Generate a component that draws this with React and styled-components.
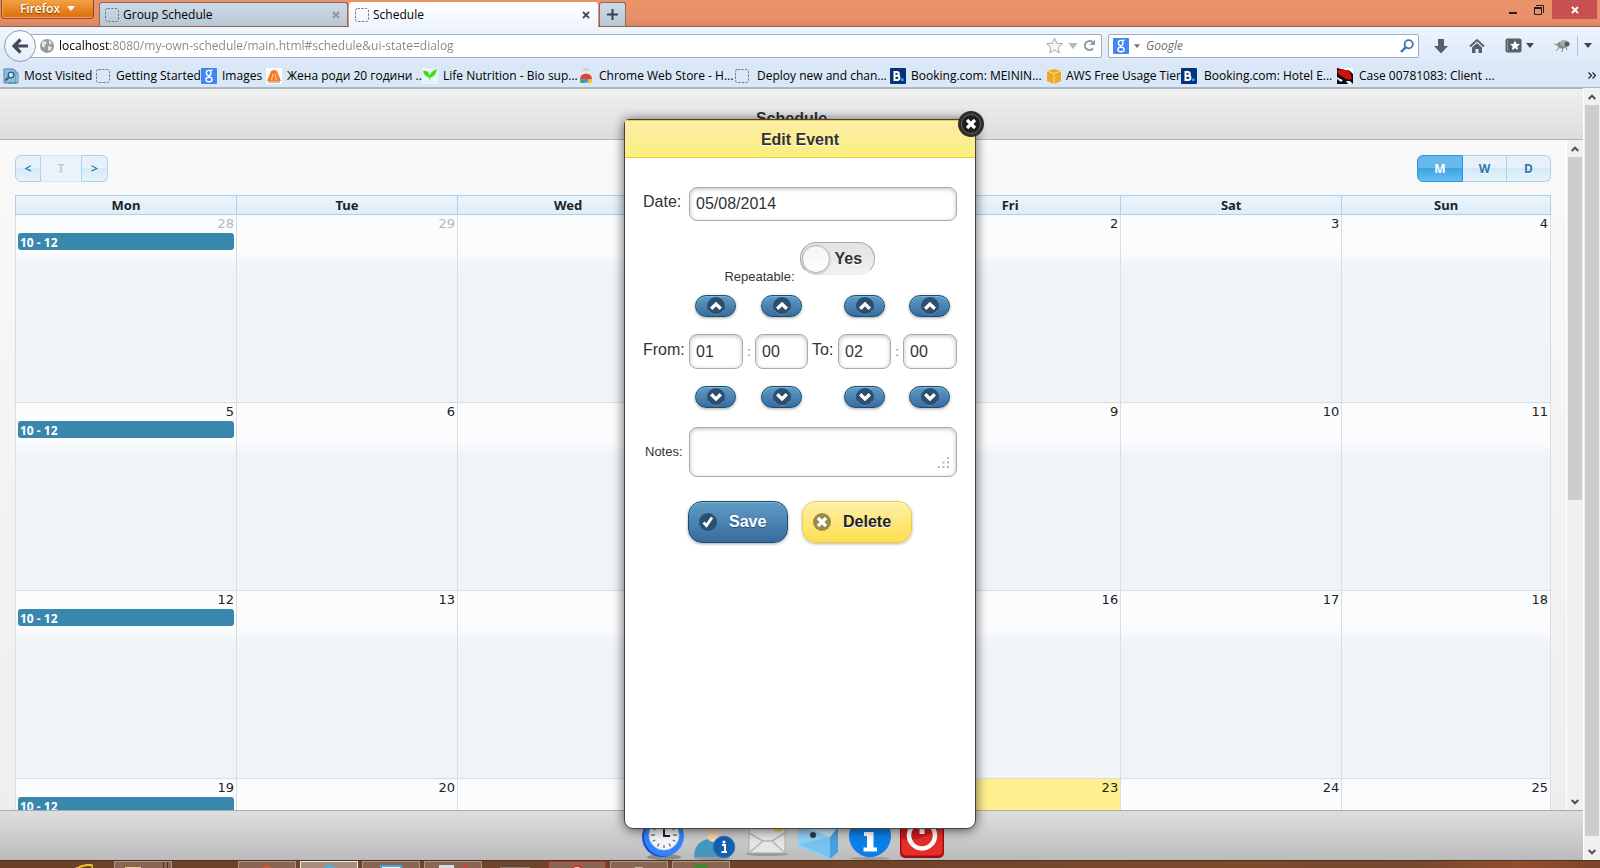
import React from "react";
import styled, { createGlobalStyle, css } from "styled-components";

const UI = '"Open Sans", "Noto Sans", sans-serif';
const ARIAL = '"Liberation Sans", Arial, sans-serif';
const CAL = '"Noto Sans", "Open Sans", sans-serif';

const Global = createGlobalStyle`
  * { box-sizing: border-box; }
  html, body { margin: 0; height: 100%; }
  body { font-family: ${ARIAL}; color: #333; overflow: hidden; }
  button, input, textarea { font: inherit; color: inherit; margin: 0; }
  button { cursor: pointer; }
  svg { display: block; flex: none; }
`;

const Window = styled.div`
  display: flex;
  flex-direction: column;
  height: 100vh;
`;

/* ---------- browser chrome ---------- */
const TitleBar = styled.header`
  display: flex;
  align-items: flex-start;
  height: 27px;
  flex: none;
  padding-left: 1px;
  background: linear-gradient(#ea9268, #e8906a 70%, #d98560);
  border-bottom: 1px solid #94614c;
  font: 12px/16px ${UI};
`;
const FirefoxButton = styled.button`
  display: flex;
  align-items: center;
  justify-content: center;
  gap: 7px;
  width: 93px;
  height: 19px;
  padding: 0 0 1px;
  margin-right: 4px;
  border: 1px solid #8f4a1b;
  border-top: 0;
  border-radius: 0 0 4px 4px;
  background: linear-gradient(#f0a347, #e87f1c 60%, #d96d12);
  box-shadow: inset 0 -1px 0 #f4a862, inset 1px 0 0 #f2a55a;
  color: #fff;
  font-weight: 600;
  text-shadow: 0 1px 1px #7a3a00;
`;
const Tab = styled.button`
  display: flex;
  align-items: center;
  gap: 3px;
  width: 249px;
  height: ${(p) => (p.$active ? 25 : 24)}px;
  margin: 2px 0 0 1px;
  padding: 0 7px 0 4px;
  border: 1px solid ${(p) => (p.$active ? "#fff" : "#8d6a62")};
  border-bottom: 0;
  border-radius: 3px 3px 0 0;
  background: ${(p) => (p.$active ? "linear-gradient(#fff, #eef5fd)" : "linear-gradient(#cddbe8, #b9c7d5)")};
  color: #000;
  text-align: left;
`;
const Grow = styled.span`
  flex: 1;
  min-width: 0;
  white-space: nowrap;
  overflow: hidden;
`;
const NewTab = styled.button`
  display: grid;
  place-items: center;
  width: 27px;
  height: 24px;
  margin: 2px 0 0 1px;
  padding: 0;
  border: 1px solid #8d6a62;
  border-bottom: 0;
  border-radius: 3px 3px 0 0;
  background: linear-gradient(#cddbe8, #b9c7d5);
`;
const WindowButtons = styled.div`
  display: flex;
  margin-left: auto;
  padding-right: 3px;
`;
const WindowButton = styled.button`
  display: grid;
  place-items: center;
  width: ${(p) => (p.$close ? 45 : 26)}px;
  height: 19px;
  padding: 0;
  border: 0;
  background: ${(p) => (p.$close ? "#c75050" : "transparent")};
`;

const NavBar = styled.div`
  display: flex;
  align-items: center;
  height: 35px;
  flex: none;
  padding: 2px 0 0 4px;
  background: linear-gradient(#eef5fd, #dce9f7);
  font: 12px/16px ${UI};
`;
const BackButton = styled.button`
  z-index: 1;
  display: grid;
  place-items: center;
  width: 32px;
  height: 32px;
  flex: none;
  padding: 0;
  border: 1px solid #8d9db3;
  border-radius: 50%;
  background: linear-gradient(#fbfdff, #e3edf8);
`;
const Field = styled.label`
  display: flex;
  align-items: center;
  height: 24px;
  border: 1px solid #9cafc6;
  border-radius: 2px;
  background: #fff;
`;
const UrlField = styled(Field)`
  flex: 1;
  margin-left: -8px;
  padding: 0 5px 0 11px;
  gap: 5px;
`;
const UrlInput = styled.input`
  flex: 1;
  min-width: 0;
  padding: 0;
  border: 0;
  outline: 0;
  color: transparent;
  background: linear-gradient(to right, #000 51px, #858585 51px);
  background-clip: text;
  -webkit-background-clip: text;
`;
const SearchField = styled(Field)`
  width: 311px;
  margin-left: 6px;
  padding: 0 4px;
  gap: 5px;
`;
const SearchInput = styled.input`
  flex: 1;
  min-width: 0;
  padding: 0 0 0 1px;
  border: 0;
  outline: 0;
  background: transparent;
  &::placeholder { color: #6d6d6d; font-style: italic; opacity: 1; }
`;
const Tools = styled.div`
  display: flex;
  align-items: center;
  gap: 20px;
  padding: 0 8px 0 14px;
`;
const ToolButton = styled.button`
  display: flex;
  align-items: center;
  gap: 4px;
  padding: 0;
  border: 0;
  background: none;
`;
const ToolDivider = styled.span`
  display: flex;
  align-items: center;
  height: 20px;
  margin-left: -13px;
  padding-left: 6px;
  border-left: 1px solid #b4c2d2;
`;

const BookmarksBar = styled.nav`
  display: flex;
  align-items: center;
  height: 26px;
  flex: none;
  padding: 2px 4px 0 3px;
  background: #d9e7f6;
  border-bottom: 1px solid #a9b7ca;
  font: 12px/16px ${UI};
`;
const Bookmark = styled.a`
  display: flex;
  align-items: center;
  gap: ${(p) => p.$gap || 5}px;
  width: ${(p) => p.$w}px;
  flex: none;
  color: #000;
  text-decoration: none;
  white-space: nowrap;
`;

/* ---------- page ---------- */
const Viewport = styled.div`
  position: relative;
  display: flex;
  flex: 1;
  min-height: 0;
  overflow: hidden;
`;
const Page = styled.div`
  display: flex;
  flex-direction: column;
  flex: 1;
  min-width: 0;
`;
const PageHeader = styled.div`
  display: grid;
  place-items: center;
  height: 52px;
  flex: none;
  padding-top: 8px;
  border-top: 1px solid #b3b3b3;
  border-bottom: 1px solid #b3b3b3;
  background: linear-gradient(#f0f0f0, #ddd);
`;
const PageTitle = styled.h1`
  margin: 0;
  font-size: 16px;
  line-height: 21px;
  text-shadow: 0 1px 0 #fff;
`;
const Body = styled.div`
  display: flex;
  flex: 1;
  min-height: 0;
`;
const Content = styled.main`
  flex: 1;
  min-width: 0;
  overflow: hidden;
  padding: 15px 15px 0;
  background: linear-gradient(#f9f9f9, #eee);
`;

const ScrollTrack = styled.div`
  display: flex;
  flex-direction: column;
  align-items: center;
  width: 17px;
  flex: none;
  padding: 0 1px;
  background: #f0f0f0;
  border-left: 1px solid #fff;
`;
const ScrollArrow = styled.button`
  display: grid;
  place-items: center;
  width: 15px;
  height: 17px;
  flex: none;
  padding: 0;
  border: 0;
  background: none;
`;
const ScrollArea = styled.div`
  flex: 1;
  align-self: stretch;
`;
const Thumb = styled.div`
  height: ${(p) => p.$size}%;
  background: #cdcdcd;
`;

const Toolbar = styled.div`
  display: flex;
  justify-content: space-between;
  margin-bottom: 13px;
  font: bold 12px/16px ${CAL};
`;
const ButtonGroup = styled.div`
  display: flex;
`;
const CalButton = styled.button`
  width: ${(p) => p.$w}px;
  height: 27px;
  padding: 0;
  border: 1px solid #aed0ea;
  border-left-width: ${(p) => (p.$first ? 1 : 0)}px;
  border-radius: ${(p) => (p.$first ? "6px 0 0 6px" : p.$last ? "0 6px 6px 0" : "0")};
  background: linear-gradient(#e6f1fa 50%, #d3e9f7 50%, #e6f3fb);
  color: #2779aa;
  text-shadow: 0 1px 0 #fff;
  ${(p) => p.$on && css`
    border: 1px solid #2694e8;
    background: linear-gradient(#66b9ea 50%, #3ba5e2 50%, #68bcec);
    color: #fff;
    text-shadow: none;
  `}
  &:disabled {
    border-color: #d8e7f3;
    border-right-color: #aed0ea;
    background: #ebf2f9;
    color: #b0ccdf;
    cursor: default;
  }
`;

const Table = styled.table`
  width: 100%;
  table-layout: fixed;
  border-collapse: collapse;
  font-family: ${CAL};
`;
const DayHead = styled.th`
  width: 14.4%;
  height: 19px;
  padding: 1px 0 0;
  border: 1px solid #aed0ea;
  background: linear-gradient(#eaf4fb, #deedf7);
  color: #222;
  font-size: 13px;
  line-height: 17px;
  &:last-child { width: auto; }
`;
const DayCell = styled.td`
  height: 188px;
  padding: 0 2px;
  vertical-align: top;
  border: 1px solid #ddd;
  background: ${(p) => (p.$today ? "#ffef8f" : "linear-gradient(#fbfcfe 35px, #f0f4f7 55px)")};
  ${(p) => p.$today && css`border-top-color: #f9dd34;`}
`;
const DayNumber = styled.div`
  height: 16px;
  color: ${(p) => (p.$other ? "#b8b8b8" : "#222")};
  font: 13px/17px "DejaVu Sans", sans-serif;
  text-align: right;
`;
const EventBar = styled.a`
  display: block;
  height: 17px;
  margin-top: 2px;
  padding-left: 2px;
  border-radius: 3px;
  background: #3a87ad;
  color: #fff;
  font: bold 12px/19px ${UI};
  text-decoration: none;
`;

const Footer = styled.footer`
  display: flex;
  justify-content: center;
  gap: 8px;
  height: 50px;
  flex: none;
  padding-top: 4px;
  border-top: 1px solid #aaa;
  background: linear-gradient(#dedede, #bbb);
`;
const FooterButton = styled.button`
  width: 44px;
  height: 46px;
  padding: 0;
  border: 0;
  background: none;
`;

/* ---------- dialog ---------- */
const Overlay = styled.div`
  position: absolute;
  inset: 0;
  display: flex;
  justify-content: center;
  padding: 31px 0;
`;
const Dialog = styled.section`
  position: relative;
  width: 352px;
  border: 1px solid #444;
  border-radius: 5px 0 9px 9px;
  background: #fff;
  box-shadow: 0 1px 12px rgba(0, 0, 0, 0.65);
`;
const DialogHeader = styled.h2`
  height: 38px;
  margin: 0;
  border-top: 1px solid #f7c942;
  border-bottom: 1px solid #f7c942;
  background: linear-gradient(#fceda7, #fbef7e);
  font-size: 16px;
  line-height: 37px;
  text-align: center;
  text-shadow: 0 1px 0 #fff;
`;
const CloseButton = styled.button`
  position: absolute;
  top: -9px;
  right: -9px;
  width: 26px;
  height: 26px;
  padding: 0;
  border: 0;
  background: none;
`;
const Form = styled.form`
  display: flex;
  flex-direction: column;
  padding: 29px 18px 0;
`;
const Row = styled.div`
  display: grid;
  grid-template-columns: 46px 1fr;
  align-items: center;
`;
const Label = styled.label`
  font-size: ${(p) => (p.$small ? 13 : 16)}px;
  line-height: 20px;
  padding-left: ${(p) => (p.$small ? 2 : 0)}px;
  padding-bottom: ${(p) => (p.$small ? 0 : 4)}px;
`;
const box = css`
  width: 100%;
  border: 1px solid #aaa;
  border-radius: 8px;
  background: #fff;
  outline: 0;
  box-shadow: inset 0 1px 4px rgba(0, 0, 0, 0.25);
  font-size: 16px;
`;
const TextInput = styled.input`
  ${box}
  height: ${(p) => p.$h || 35}px;
  padding: 0 6px;
`;
const NotesWrap = styled.div`
  position: relative;
  height: 50px;
`;
const Notes = styled.textarea`
  ${box}
  display: block;
  height: 50px;
  resize: none;
  padding: 6px;
`;
const Grip = styled.svg`
  position: absolute;
  right: 8px;
  bottom: 9px;
`;
const RepeatRow = styled.div`
  display: flex;
  justify-content: center;
  gap: 5px;
  margin: 21px 0 10px;
  padding-right: 1px;
  height: 43px;
`;
const RepeatLabel = styled.label`
  align-self: flex-end;
  font-size: 13px;
  line-height: 16px;
`;
const Toggle = styled.label`
  display: flex;
  align-items: center;
  gap: 5px;
  width: 75px;
  height: 33px;
  padding-left: 1px;
  border: 1px solid #aaa;
  border-bottom-color: #eee;
  border-radius: 16px;
  background: linear-gradient(#e2e2e2, #f2f2f2);
  font-weight: bold;
  font-size: 16px;
  line-height: 35px;
  text-shadow: 0 1px 0 #fff;
`;
const ToggleInput = styled.input`
  appearance: none;
  width: 28px;
  height: 28px;
  border: 1px solid #b5b5b5;
  border-radius: 50%;
  background: linear-gradient(#f4f4f4, #fefefe);
  box-shadow: 0 1px 2px rgba(0, 0, 0, 0.25);
`;
const TimeGrid = styled.div`
  display: grid;
  grid-template-columns: 46px 54px 12px 53px 30px 53px 12px 54px;
  grid-template-rows: 22px 35px 22px;
  row-gap: 17px;
  align-items: center;
  margin-bottom: 19px;
`;
const blue = css`
  border: 1px solid #145072;
  background: linear-gradient(#5f9cc5, #396b9e);
  box-shadow: inset 0 1px 0 #85b4d3, 0 1px 3px rgba(0, 0, 0, 0.35);
`;
const Spin = styled.button`
  ${blue}
  display: grid;
  place-items: center;
  grid-column: ${(p) => p.$col};
  margin-left: 6px;
  width: 41px;
  height: 22px;
  padding: 0;
  border-radius: 11px;
`;
const Sep = styled.span`
  font-size: 13px;
  text-align: center;
  color: #666;
`;
const ToLabel = styled(Label)`
  padding-left: 4px;
`;
const Actions = styled.div`
  display: flex;
  gap: 14px;
  margin: 24px 0 0 45px;
`;
const Action = styled.button`
  display: flex;
  align-items: center;
  gap: 12px;
  width: ${(p) => (p.$danger ? 110 : 100)}px;
  height: 42px;
  padding: 0 0 0 10px;
  border-radius: 14px;
  font-weight: bold;
  font-size: 16px;
  text-align: left;
  ${blue}
  color: #fff;
  text-shadow: 0 1px 1px #194b7e;
  ${(p) => p.$danger && css`
    border-color: #f7c942;
    background: linear-gradient(#fef0a8, #fddf4f);
    box-shadow: inset 0 1px 0 #fff5cc, 0 1px 3px rgba(0, 0, 0, 0.3);
    color: #222;
    text-shadow: 0 1px 0 #fff;
  `}
`;

/* ---------- taskbar ---------- */
const TaskBar = styled.div`
  display: flex;
  height: 8px;
  flex: none;
  gap: 4px;
  overflow: hidden;
  padding-left: 52px;
  border-top: 1px solid #4b3122;
  background: linear-gradient(to right, #6b3f28, #6f452b 25%, #6e4229 50%, #7d4a2b 78%, #75482e 88%, #924e2b 95%, #7c4529);
`;
const Task = styled.button`
  display: flex;
  justify-content: center;
  align-items: flex-start;
  width: 58px;
  height: 30px;
  flex: none;
  padding: 2px 0 0;
  border: 1px solid ${(p) => p.$edge || "#ad9488"};
  background: ${(p) => (p.$active ? "#a88c7c" : "#8a6652")};
  ${(p) => p.$plain && css`
    border-color: transparent;
    background: none;
  `}
  ${(p) => p.$stack && css`
    padding-right: 20px;
    box-shadow: inset -3px 0 0 #8a6652, inset -4px 0 0 #4b3122, inset -7px 0 0 #8a6652, inset -8px 0 0 #4b3122;
  `}
`;

/* ---------- drawings ---------- */
const Caret = ({ color = "#3d4854", size = 8 }) => (
  <svg width={size} height={size / 2 + 1} viewBox="0 0 8 5"><path d="M0 0h8L4 5z" fill={color} /></svg>
);
const Dashed = () => (
  <svg width="16" height="16" viewBox="0 0 16 16">
    <rect x="1.5" y="1.5" width="13" height="13" rx="2" fill="none" stroke="#6f7780" strokeDasharray="2.4 1.3" />
  </svg>
);
const Cross = ({ color }) => (
  <svg width="8" height="8" viewBox="0 0 8 8"><path d="M1 1l6 6M7 1L1 7" stroke={color} strokeWidth="1.8" /></svg>
);
const GoogleIcon = () => (
  <svg width="16" height="16" viewBox="0 0 16 16">
    <rect width="16" height="16" rx="1" fill="#4485f4" />
    <g fill="none" stroke="#fff" strokeWidth="1.4">
      <ellipse cx="7.7" cy="5" rx="2.3" ry="2.6" />
      <path d="M8 7.5c-1.2 1 .2 1.5 1.3 2.2M9.5 2.2h2" />
      <ellipse cx="8" cy="11.4" rx="3.1" ry="2.3" />
    </g>
  </svg>
);
const BookingIcon = () => (
  <svg width="16" height="16" viewBox="0 0 16 16">
    <rect width="16" height="16" rx="1" fill="#04327d" />
    <path d="M4.500 4h2.500a1.700 1.700 0 0 1 0 3.700H4.500zM4.500 7.700h2.800a2 2 0 0 1 0 4.300H4.500z" fill="none" stroke="#fff" strokeWidth="2" />
    <circle cx="12.3" cy="11.8" r="1.5" fill="#24b1f0" />
  </svg>
);
const icons = {
  visited: (
    <svg width="16" height="16" viewBox="0 0 16 16">
      <path d="M1 1h9l3 2v12H1z" fill="#8cbede" stroke="#4a86ac" />
      <path d="M13 5h2v10H5" fill="none" stroke="#4a86ac" />
      <circle cx="8" cy="7" r="2.8" fill="#cfe6f4" stroke="#2b5f85" strokeWidth="1.3" />
      <path d="M6 9l-3.5 3.5" stroke="#2b5f85" strokeWidth="2" />
    </svg>
  ),
  dashed: <Dashed />,
  google: <GoogleIcon />,
  orange: (
    <svg width="16" height="16" viewBox="0 0 16 16">
      <rect width="16" height="16" fill="#fff" />
      <path d="M1 13L5 3q3-2 6 0l4 10z" fill="#f57d2a" />
      <path d="M5.500 12l1.500-6M10.500 12L9 6" stroke="#fbd2b0" />
      <path d="M2 14h12" stroke="#b9684a" />
    </svg>
  ),
  leaf: (
    <svg width="16" height="16" viewBox="0 0 16 16">
      <rect width="16" height="16" fill="#e9f4f4" />
      <path d="M1 3q6-1 6.5 5Q9 3 15 1q-1 7-6.5 8.500L8 14q0-4-2-5Q2 8 1 3z" fill="#3fdc1e" />
    </svg>
  ),
  store: (
    <svg width="16" height="16" viewBox="0 0 16 16">
      <path d="M2 4h12l1 11H1z" fill="#e9e9e9" /><path d="M6 3V1h4v2" fill="none" stroke="#bbb" />
      <path d="M2 11a6 5.500 0 0 1 12 0l-6 1z" fill="#dd4433" />
      <path d="M2 11l6 1-1 3H2.500z" fill="#3aa757" /><path d="M14 11l-6 1 1 3h4.500z" fill="#fbc116" />
      <circle cx="8" cy="12.500" r="2.200" fill="#4b8bf4" />
    </svg>
  ),
  booking: <BookingIcon />,
  aws: (
    <svg width="16" height="16" viewBox="0 0 16 16">
      <path d="M1 3l7-2 7 2v10l-7 3-7-3z" fill="#efa920" />
      <path d="M1 3l7 2.5L15 3M8 5.5V16" fill="none" stroke="#fbdc95" />
    </svg>
  ),
  redhat: (
    <svg width="16" height="16" viewBox="0 0 16 16">
      <rect width="16" height="16" fill="#0a0a0a" />
      <path d="M0 0h16v6l-3-3z" fill="#fff" />
      <path d="M0 3l4-2 3 1 5 0 2 5 1 4q-5 2-9-2Q1 7 0 3z" fill="#cc1010" />
      <path d="M0 9q3 2 6 3l-2 2-4-3zM9 13l4 0 3 3h-5z" fill="#eee" />
    </svg>
  ),
};
const Chevron = ({ up }) => (
  <svg width="18" height="18" viewBox="0 0 18 18">
    <circle cx="9" cy="9" r="9" fill="#2b4f70" />
    <path d="M1.500 13a8.500 8.500 0 0 0 15 0" fill="none" stroke="#7aa0bf" opacity=".7" />
    <path d={up ? "M4.200 11.700L9 7l4.800 4.700" : "M4.200 6.300L9 11l4.800-4.700"} fill="none" stroke="#fff" strokeWidth="3.300" />
  </svg>
);
const ScrollChevron = ({ up }) => (
  <svg width="8" height="6" viewBox="0 0 8 6">
    <path d={up ? "M.7 5L4 1.700 7.300 5" : "M.7 1L4 4.300 7.300 1"} fill="none" stroke="#505050" strokeWidth="2" />
  </svg>
);

const ClockIcon = () => (
  <svg width="44" height="46" viewBox="0 0 44 46">
    <ellipse cx="24" cy="42" rx="17" ry="3" fill="#8b8b8b" />
    <circle cx="22" cy="22" r="20" fill="#1a4fd0" />
    <circle cx="24" cy="21" r="20" fill="#3583fb" />
    <circle cx="24" cy="20" r="15" fill="#f4f6f9" stroke="#c8d7ea" />
    <g stroke="#777" strokeWidth="1.4">
      <path d="M24 8v3M24 30v3M11 20h4M33 20h4M17.500 8.700l1.500 2.600M29 28.700l1.500 2.600M12.700 26.500l2.600-1.500M32.700 15l2.600-1.500M17.500 31.300l1.500-2.600M12.700 13.500l2.600 1.500M32.700 25l2.600 1.500" />
    </g>
    <path d="M24 9v12h6" fill="none" stroke="#222" strokeWidth="2" />
  </svg>
);
const PersonIcon = () => (
  <svg width="44" height="46" viewBox="0 0 44 46">
    <ellipse cx="20" cy="43" rx="18" ry="2" fill="#999" />
    <path d="M2 42q0-15 14-18h10q9 3 10 18z" fill="#4597bd" />
    <path d="M15 23q6 8 11 0l-2-6h-7z" fill="#f5d5b5" /><circle cx="21" cy="12" r="8" fill="#f0c9a5" />
    <circle cx="32" cy="32" r="10.800" fill="#135fae" stroke="#2f7cc4" />
    <circle cx="32" cy="27" r="1.600" fill="#fff" /><path d="M30 30h3v7M29.500 37h5.500" fill="none" stroke="#fff" strokeWidth="2" />
  </svg>
);
const MailIcon = () => (
  <svg width="44" height="46" viewBox="0 0 44 46">
    <ellipse cx="23" cy="39" rx="21" ry="2" fill="#999" />
    <path d="M5 10h36v28H5z" fill="#e6e6e6" stroke="#aaa" />
    <path d="M5 38l14-12h9l13 12M5 18l14 8M41 18l-13 8" fill="none" stroke="#b5b5b5" strokeWidth="1.5" />
    <circle cx="34" cy="11" r="6" fill="#f0d43c" />
  </svg>
);
const BoxIcon = () => (
  <svg width="44" height="46" viewBox="0 0 44 46">
    <path d="M2 10l32 12v22L2 32z" fill="#90d0f6" /><path d="M34 22l8-10v25l-8 7z" fill="#4aa0dc" />
    <path d="M2 10l20-8 20 10-8 10z" fill="#c3e7fb" /><path d="M3 29l31-7v21z" fill="#67b9ee" opacity=".6" />
    <circle cx="17" cy="20" r="3" fill="#333c45" />
  </svg>
);
const InfoIcon = () => (
  <svg width="44" height="46" viewBox="0 0 44 46">
    <ellipse cx="22" cy="43.500" rx="20" ry="1.500" fill="#999" />
    <circle cx="22" cy="21" r="21" fill="#0b7fe9" />
    <circle cx="22" cy="10.500" r="3.500" fill="#fff" />
    <path d="M16 17h9.500v15.500H29v4H15.500v-4H19V21h-3z" fill="#fff" />
  </svg>
);
const PowerIcon = () => (
  <svg width="44" height="46" viewBox="0 0 44 46">
    <rect x="0" y="1" width="44" height="42" rx="5" fill="#9b0d10" />
    <rect x="1" y="0" width="42" height="41" rx="5" fill="#d4181a" />
    <path d="M2 24q20 3 40-12v24q0 4-4 4H6q-4 0-4-4z" fill="#ee4034" opacity=".6" />
    <path d="M13 11a13 13 0 1 0 18 0" fill="none" stroke="#fff" strokeWidth="4.500" />
    <path d="M22 5v14" stroke="#fff" strokeWidth="5" />
  </svg>
);

const bookmarks = [
  ["visited", "Most Visited", 92],
  ["dashed", "Getting Started", 106],
  ["google", "Images", 65],
  ["orange", "Жена роди 20 години ...", 156],
  ["leaf", "Life Nutrition - Bio sup...", 156],
  ["store", "Chrome Web Store - H...", 156],
  ["dashed", "Deploy new and chan...", 156, 7],
  ["booking", "Booking.com: MEININ...", 156],
  ["aws", "AWS Free Usage Tier", 135, 4],
  ["booking", "Booking.com: Hotel E...", 156, 7],
  ["redhat", "Case 00781083: Client ...", 160, 6],
];
const dayNames = ["Mon", "Tue", "Wed", "Thu", "Fri", "Sat", "Sun"];
const weeks = [
  [28, 29, 30, 1, 2, 3, 4],
  [5, 6, 7, 8, 9, 10, 11],
  [12, 13, 14, 15, 16, 17, 18],
  [19, 20, 21, 22, 23, 24, 25],
];
const spinColumns = [[2, "from hour"], [4, "from minute"], [6, "to hour"], [8, "to minute"]];

const Scrollbar = ({ size }) => (
  <ScrollTrack>
    <ScrollArrow aria-label="Scroll up"><ScrollChevron up /></ScrollArrow>
    <ScrollArea><Thumb $size={size} /></ScrollArea>
    <ScrollArrow aria-label="Scroll down"><ScrollChevron /></ScrollArrow>
  </ScrollTrack>
);

function Chrome() {
  return (
    <>
      <TitleBar>
        <FirefoxButton>Firefox <Caret color="#fff" /></FirefoxButton>
        <Tab><Dashed /><Grow>Group Schedule</Grow><Cross color="#8a949e" /></Tab>
        <Tab $active><Dashed /><Grow>Schedule</Grow><Cross color="#444c55" /></Tab>
        <NewTab aria-label="New tab">
          <svg width="11" height="11" viewBox="0 0 11 11"><path d="M5.500 0v11M0 5.500h11" stroke="#33424f" strokeWidth="2" /></svg>
        </NewTab>
        <WindowButtons>
          <WindowButton aria-label="Minimize">
            <svg width="8" height="10" viewBox="0 0 8 10"><path d="M0 8h8" stroke="#222" strokeWidth="2" /></svg>
          </WindowButton>
          <WindowButton aria-label="Restore">
            <svg width="10" height="10" viewBox="0 0 10 10"><path d="M2 .5h7.500V8M.5 2.500h7v7h-7z" fill="none" stroke="#222" /><path d="M0 3h8" stroke="#222" strokeWidth="2" /></svg>
          </WindowButton>
          <WindowButton $close aria-label="Close"><Cross color="#fff" /></WindowButton>
        </WindowButtons>
      </TitleBar>
      <NavBar>
        <BackButton aria-label="Back">
          <svg width="16" height="16" viewBox="0 0 16 16"><path d="M8.500 1.500L2 8l6.500 6.500M2.500 8H16" fill="none" stroke="#3f4b58" strokeWidth="3.200" /></svg>
        </BackButton>
        <UrlField>
          <svg width="14" height="14" viewBox="0 0 14 14">
            <circle cx="7" cy="7" r="7" fill="#9a9a9a" />
            <path d="M2 3l3-1 2 2-2 2-1 3-2-2zM9 1l3 3-2 2-1-2zM8 7l4 1-2 4-2-1z" fill="#e6e6e6" />
          </svg>
          <UrlInput aria-label="Address" defaultValue="localhost:8080/my-own-schedule/main.html#schedule&ui-state=dialog" />
          <svg width="17" height="17" viewBox="0 0 17 17"><path d="M8.500 1l2.200 5.200 5.600.5-4.200 3.800 1.200 5.500-4.800-2.900L3.700 16l1.200-5.500L.7 6.700l5.600-.5z" fill="#f6f6f6" stroke="#a8a8a8" /></svg>
          <Caret color="#b3b9c0" size={10} />
          <svg width="13" height="13" viewBox="0 0 13 13"><path d="M10 9.500A4.600 4.600 0 1 1 10 3.500" fill="none" stroke="#939ca5" strokeWidth="2" /><path d="M12 .5V6H6.500z" fill="#939ca5" /></svg>
        </UrlField>
        <SearchField>
          <GoogleIcon />
          <Caret color="#6b737c" size={6} />
          <SearchInput aria-label="Search" placeholder="Google" />
          <svg width="14" height="14" viewBox="0 0 14 14"><circle cx="8.700" cy="5.300" r="4.100" fill="none" stroke="#3873b3" strokeWidth="1.800" /><path d="M5.700 8.300L1 13" stroke="#3873b3" strokeWidth="2.400" /></svg>
        </SearchField>
        <Tools>
          <ToolButton aria-label="Downloads">
            <svg width="16" height="16" viewBox="0 0 16 16"><path d="M5 1h6v7h4l-7 7.500L1 8h4z" fill="#55606d" /></svg>
          </ToolButton>
          <ToolButton aria-label="Home">
            <svg width="16" height="16" viewBox="0 0 16 16"><path d="M1 8.500L8 2l7 6.500" fill="none" stroke="#55606d" strokeWidth="2" /><path d="M3 9.500L8 5l5 4.500V15h-3.500v-4h-3v4H3z" fill="#55606d" /></svg>
          </ToolButton>
          <ToolButton aria-label="Bookmarks">
            <svg width="17" height="15" viewBox="0 0 17 15"><rect x=".5" y=".5" width="16" height="14" rx="2" fill="#55606d" /><path d="M2.500 2v11" stroke="#8c97a3" /><path d="M10 2.500l1.500 3.200 3.500.4-2.600 2.400.7 3.500-3.100-1.800L6.900 12l.7-3.500L5 6.100l3.500-.4z" fill="#fff" /></svg>
            <Caret size={8} />
          </ToolButton>
          <ToolButton aria-label="Firebug">
            <svg width="16" height="14" viewBox="0 0 16 14"><path d="M0 5l5 1M2 12l4-4M8 13l1-4M13 11l-1-4" stroke="#888" /><ellipse cx="8" cy="6" rx="5" ry="3.500" fill="#8a8a8a" /><ellipse cx="10" cy="4" rx="4" ry="3" fill="#aaa" /><circle cx="13" cy="5" r="2.500" fill="#5a5a5a" /></svg>
          </ToolButton>
          <ToolDivider><Caret /></ToolDivider>
        </Tools>
      </NavBar>
      <BookmarksBar>
        {bookmarks.map(([icon, text, w, gap]) => (
          <Bookmark key={text} href="#" $w={w} $gap={gap}>{icons[icon]}{text}</Bookmark>
        ))}
        <Grow />
        <svg width="8" height="7" viewBox="0 0 8 7"><path d="M.5.500l3 3-3 3M4.500.500l3 3-3 3" fill="none" stroke="#222" strokeWidth="1.200" /></svg>
      </BookmarksBar>
    </>
  );
}

function Calendar() {
  return (
    <Content>
      <Toolbar>
        <ButtonGroup>
          <CalButton $w={26} $first>&lt;</CalButton>
          <CalButton $w={41} disabled>T</CalButton>
          <CalButton $w={26} $last>&gt;</CalButton>
        </ButtonGroup>
        <ButtonGroup>
          <CalButton $w={46} $first $on>M</CalButton>
          <CalButton $w={44}>W</CalButton>
          <CalButton $w={44} $last>D</CalButton>
        </ButtonGroup>
      </Toolbar>
      <Table>
        <thead><tr>{dayNames.map((d) => <DayHead key={d}>{d}</DayHead>)}</tr></thead>
        <tbody>
          {weeks.map((week, w) => (
            <tr key={w}>
              {week.map((day, i) => (
                <DayCell key={day} $today={w === 3 && day === 23}>
                  <DayNumber $other={w === 0 && day > 20}>{day}</DayNumber>
                  {i === 0 && <EventBar href="#">10 - 12</EventBar>}
                </DayCell>
              ))}
            </tr>
          ))}
        </tbody>
      </Table>
    </Content>
  );
}

function EditEvent() {
  return (
    <Overlay>
      <Dialog role="dialog" aria-labelledby="edit-title">
        <DialogHeader id="edit-title">Edit Event</DialogHeader>
        <CloseButton aria-label="Close">
          <svg width="26" height="26" viewBox="0 0 26 26">
            <circle cx="13" cy="13" r="13" fill="#2e2e2e" />
            <circle cx="13" cy="13" r="9.500" fill="#1d1d1d" stroke="#666" />
            <path d="M9 9l8 8M17 9l-8 8" stroke="#fff" strokeWidth="3.300" />
          </svg>
        </CloseButton>
        <Form onSubmit={(e) => e.preventDefault()}>
          <Row>
            <Label htmlFor="date">Date:</Label>
            <TextInput id="date" $h={34} defaultValue="05/08/2014" />
          </Row>
          <RepeatRow>
            <RepeatLabel htmlFor="repeat">Repeatable:</RepeatLabel>
            <Toggle><ToggleInput id="repeat" type="checkbox" />Yes</Toggle>
          </RepeatRow>
          <TimeGrid>
            {spinColumns.map(([c, n]) => (
              <Spin key={n} type="button" $col={c} aria-label={"Increase " + n}><Chevron up /></Spin>
            ))}
            <Label htmlFor="from">From:</Label>
            <TextInput id="from" defaultValue="01" />
            <Sep>:</Sep>
            <TextInput aria-label="From minute" defaultValue="00" />
            <ToLabel htmlFor="to">To:</ToLabel>
            <TextInput id="to" defaultValue="02" />
            <Sep>:</Sep>
            <TextInput aria-label="To minute" defaultValue="00" />
            {spinColumns.map(([c, n]) => (
              <Spin key={n} type="button" $col={c} aria-label={"Decrease " + n}><Chevron /></Spin>
            ))}
          </TimeGrid>
          <Row>
            <Label $small htmlFor="notes">Notes:</Label>
            <NotesWrap>
              <Notes id="notes" />
              <Grip width="11" height="11" viewBox="0 0 11 11"><path d="M9 0h2v2H9zM9 4.500h2v2H9zM9 9h2v2H9zM4.500 4.500h2v2h-2zM4.500 9h2v2h-2zM0 9h2v2H0z" fill="#b5b5b5" /></Grip>
            </NotesWrap>
          </Row>
          <Actions>
            <Action>
              <svg width="18" height="18" viewBox="0 0 18 18"><circle cx="9" cy="9" r="9" fill="#2b4f70" /><path d="M4.500 9.500l3 3 5.500-8" fill="none" stroke="#fff" strokeWidth="2.800" /></svg>
              <Grow>Save</Grow>
            </Action>
            <Action $danger type="button">
              <svg width="18" height="18" viewBox="0 0 18 18"><circle cx="9" cy="9" r="9" fill="#9a8b48" /><path d="M5 5l8 8M13 5l-8 8" stroke="#fff" strokeWidth="3.300" /></svg>
              <Grow>Delete</Grow>
            </Action>
          </Actions>
        </Form>
      </Dialog>
    </Overlay>
  );
}

export default function App() {
  return (
    <Window>
      <Global />
      <Chrome />
      <Viewport>
        <Page>
          <PageHeader><PageTitle>Schedule</PageTitle></PageHeader>
          <Body><Calendar /><Scrollbar size={54} /></Body>
          <Footer>
            <FooterButton aria-label="Schedule"><ClockIcon /></FooterButton>
            <FooterButton aria-label="Profile"><PersonIcon /></FooterButton>
            <FooterButton aria-label="Messages"><MailIcon /></FooterButton>
            <FooterButton aria-label="Files"><BoxIcon /></FooterButton>
            <FooterButton aria-label="About"><InfoIcon /></FooterButton>
            <FooterButton aria-label="Log out"><PowerIcon /></FooterButton>
          </Footer>
        </Page>
        <Scrollbar size={99} />
        <EditEvent />
      </Viewport>
      <TaskBar>
        <Task $plain aria-label="Browser"><svg width="24" height="20" viewBox="0 0 24 20"><path d="M3 8Q12 0 22 1q3 1 0 6" fill="none" stroke="#f0c020" strokeWidth="2" /><path d="M2 9l6-5" stroke="#d8eefa" strokeWidth="2" /></svg></Task>
        <Task $stack aria-label="Explorer"><svg width="16" height="10" viewBox="0 0 16 10"><rect y="3" width="16" height="7" fill="#e8d080" /></svg></Task>
        <Task $plain aria-label="Start" />
        <Task aria-label="Chrome"><svg width="18" height="18" viewBox="0 0 18 18"><circle cx="9" cy="10" r="8" fill="#e05545" /></svg></Task>
        <Task $active $edge="#f3ece6" aria-label="Firefox"><svg width="20" height="20" viewBox="0 0 20 20"><circle cx="10" cy="10" r="9" fill="#45b5e8" /></svg></Task>
        <Task aria-label="Notes"><svg width="22" height="16" viewBox="0 0 22 16"><rect x="1" y="2" width="20" height="14" fill="#eef6fb" stroke="#4fa5d8" strokeWidth="2" /></svg></Task>
        <Task aria-label="Editor"><svg width="30" height="16" viewBox="0 0 30 16"><path d="M1 1h15v14H1z" fill="#ddd" /><path d="M29 0l-6 10" stroke="#c84040" strokeWidth="3" /></svg></Task>
        <Task $plain aria-label="Console"><svg width="30" height="10" viewBox="0 0 30 10"><rect y="3" width="30" height="7" fill="#8d8078" /></svg></Task>
        <Task $edge="#c02a20" aria-label="Opera"><svg width="18" height="18" viewBox="0 0 18 18"><circle cx="9" cy="10" r="8" fill="#f3e4e2" stroke="#c8372c" strokeWidth="2" /></svg></Task>
        <Task aria-label="Tool"><svg width="8" height="8" viewBox="0 0 8 8"><rect y="3" width="8" height="5" fill="#c5b6aa" /></svg></Task>
        <Task aria-label="Player"><svg width="22" height="22" viewBox="0 0 22 22"><circle cx="11" cy="11" r="11" fill="#3d8a30" /></svg></Task>
      </TaskBar>
    </Window>
  );
}
